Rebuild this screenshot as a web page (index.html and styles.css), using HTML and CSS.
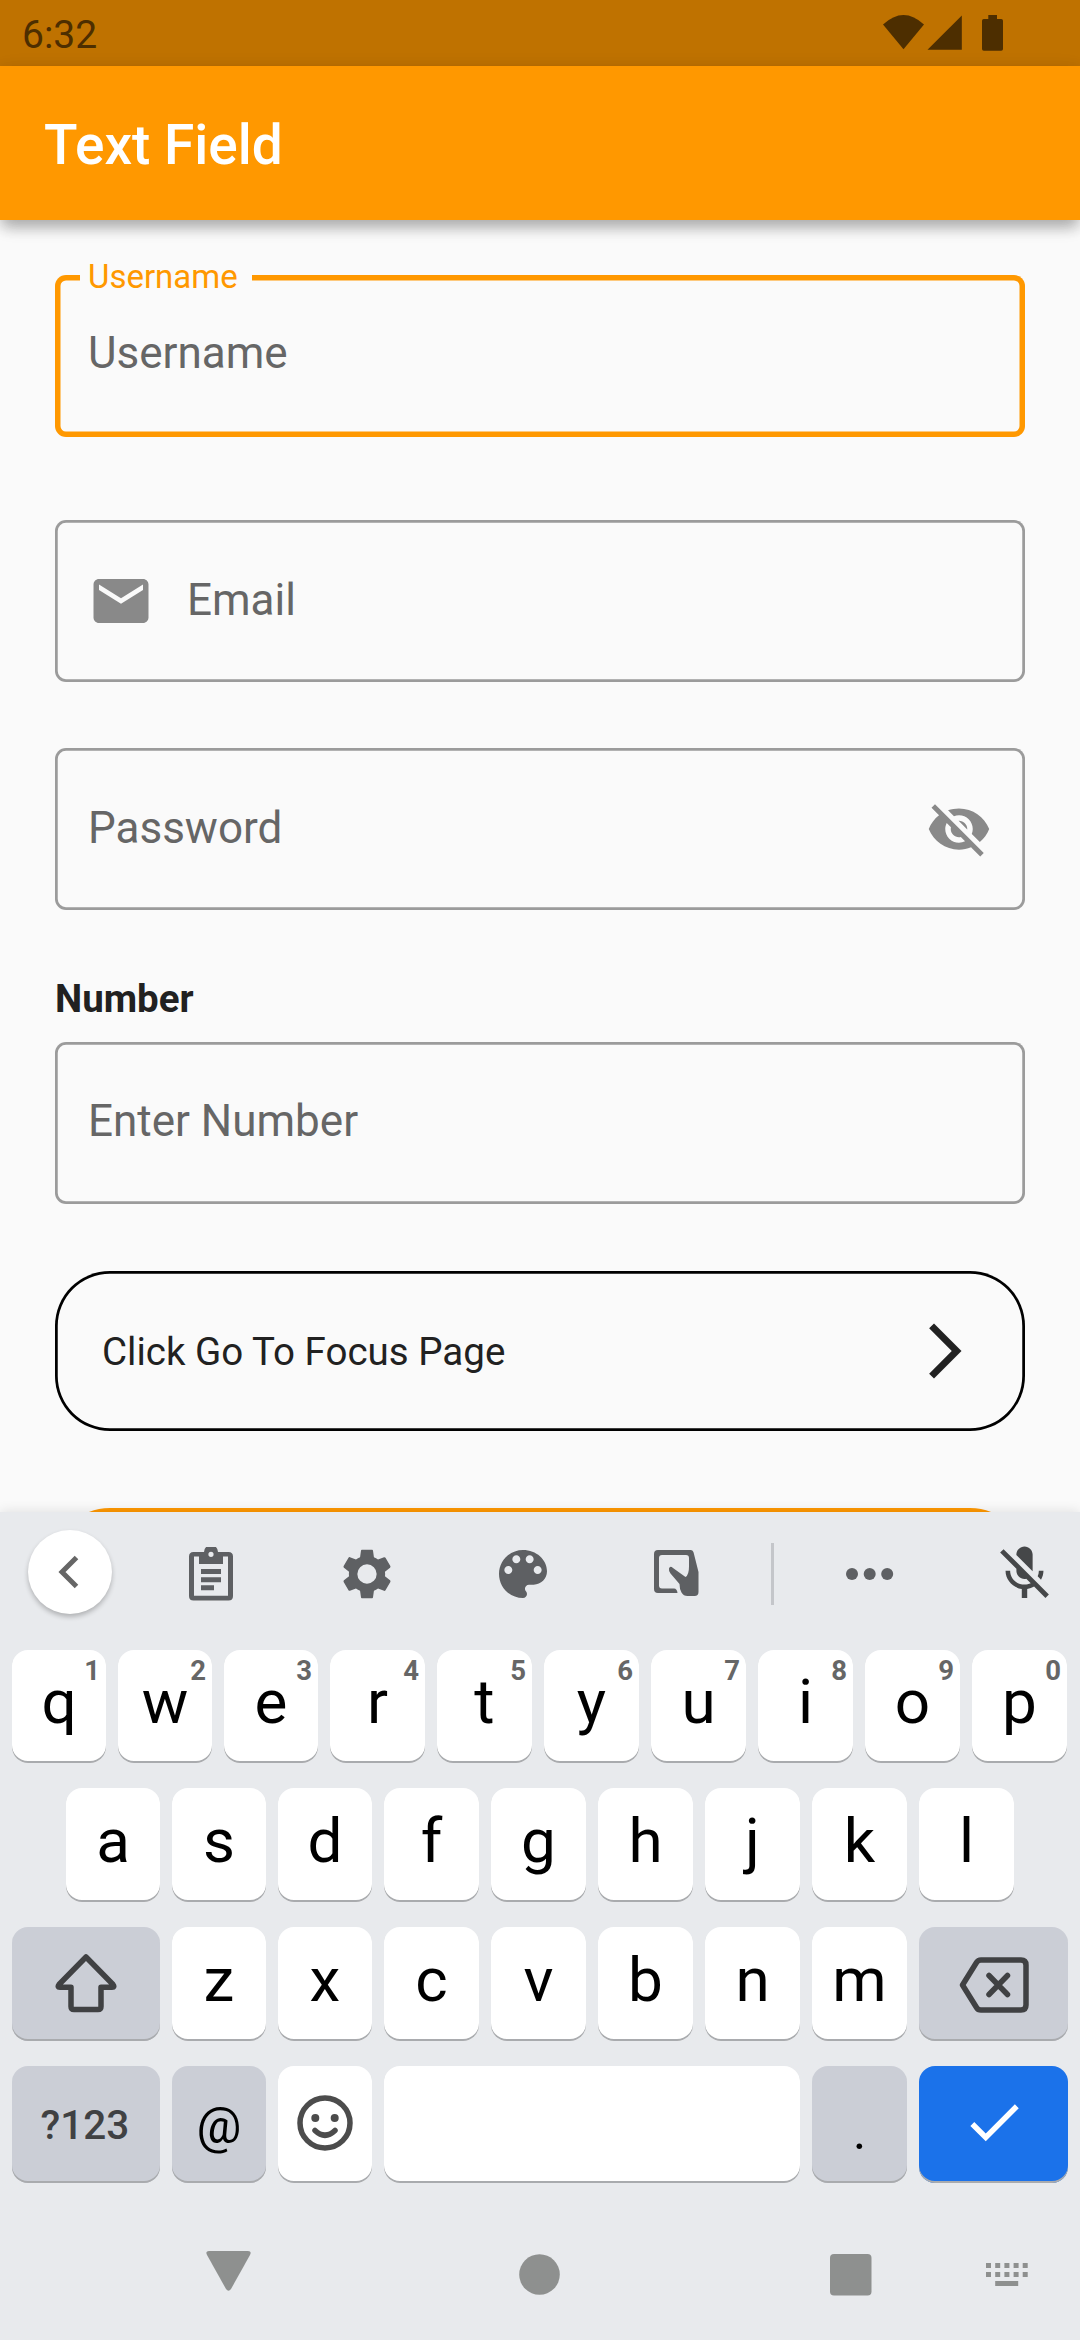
FILE: index.html
```html
<!DOCTYPE html>
<html lang="en">
<head>
<meta charset="utf-8">
<title>Text Field</title>
<link rel="stylesheet" href="styles.css">
</head>
<body>
<div class="screen">
  <header class="status-bar">
    <span class="clock">6:32</span>
    <svg class="status-icons" width="122" height="38" viewBox="882 14 122 38">
      <path d="M883 24.500Q903.500 5.500 924 24.500L903.500 49.300Z"/>
      <path d="M927.500 49.800L961.800 15.500V49.800Z"/>
      <path d="M988.300 15h8.700v4h4.200q1.800 0 1.800 1.800v28.200q0 1.800-1.800 1.800h-17.400q-1.800 0-1.800-1.800V20.800q0-1.800 1.800-1.800h4.500z"/>
    </svg>
  </header>
  <div class="app-bar"><h1>Text Field</h1></div>

  <main class="form">
    <div class="field focused">
      <span class="float-label">Username</span>
      <span class="hint">Username</span>
    </div>
    <div class="field email">
      <svg class="icon" viewBox="0 0 24 24"><path d="M20 4H4c-1.100 0-1.990.9-1.990 2L2 18c0 1.100.9 2 2 2h16c1.100 0 2-.9 2-2V6c0-1.100-.9-2-2-2zm0 4l-8 5-8-5V6l8 5 8-5v2z"/></svg>
      <span class="hint">Email</span>
    </div>
    <div class="field password">
      <span class="hint">Password</span>
      <svg class="icon" viewBox="0 0 24 24"><path d="M12 7c2.760 0 5 2.240 5 5 0 .65-.13 1.260-.36 1.830l2.920 2.920c1.510-1.260 2.700-2.890 3.430-4.750-1.730-4.390-6-7.500-11-7.500-1.400 0-2.740.25-3.980.7l2.160 2.160C10.740 7.130 11.350 7 12 7zM2 4.270l2.280 2.280.46.46C3.080 8.300 1.780 10.020 1 12c1.730 4.390 6 7.500 11 7.500 1.550 0 3.030-.3 4.380-.84l.42.42L19.730 22 21 20.730 3.270 3 2 4.270zM7.530 9.800l1.550 1.550c-.05.21-.08.43-.08.65 0 1.660 1.340 3 3 3 .22 0 .44-.03.65-.08l1.550 1.550c-.67.33-1.410.53-2.200.53-2.760 0-5-2.240-5-5 0-.79.2-1.530.53-2.200zm4.310-.78l3.150 3.150.02-.16c0-1.660-1.340-3-3-3l-.17.01z"/></svg>
    </div>
    <div class="caption">Number</div>
    <div class="field number"><span class="hint">Enter Number</span></div>
    <div class="link-card">
      <span>Click Go To Focus Page</span>
      <svg viewBox="0 0 24 24"><path d="M6.230 20.230L8 22l10-10L8 2 6.230 3.770 14.460 12z"/></svg>
    </div>
    <div class="next-card"></div>
  </main>

  <section class="keyboard">
    <div class="toolbar">
      <div class="back"><svg width="22" height="34" viewBox="0 0 22 34"><path d="M18.500 2.500L4 17 18.500 31.500" fill="none" stroke="#666" stroke-width="5"/></svg></div>
      <svg width="44" height="54" viewBox="0 0 44 54"><path fill-rule="evenodd" d="M4.500 5H15a7 7 0 0 1 14 0h10.500Q44 5 44 9.500v39.500Q44 53.500 39.500 53.500h-35Q0 53.500 0 49V9.500Q0 5 4.500 5zM10 9.500H5v39.300h34V9.500h-5V17H10zM22 4.700a2.600 2.600 0 1 0 0 5.200 2.600 2.600 0 0 0 0-5.200z"/><path d="M12 22h20v5H12zM12 30.200h20v5H12zM12 38.200h13v5H12z"/></svg>
      <svg width="58" height="58" viewBox="0 0 24 24"><path d="M19.430 12.980c.04-.32.07-.64.07-.98s-.03-.66-.07-.98l2.110-1.650c.19-.15.24-.42.12-.64l-2-3.460c-.12-.22-.39-.3-.61-.22l-2.490 1c-.52-.4-1.080-.73-1.690-.98l-.38-2.650C14.460 2.180 14.250 2 14 2h-4c-.25 0-.46.18-.49.42l-.38 2.650c-.61.25-1.170.59-1.690.98l-2.490-1c-.23-.09-.49 0-.61.22l-2 3.460c-.13.22-.07.49.12.64l2.110 1.650c-.04.32-.07.65-.07.98s.03.66.07.98l-2.110 1.650c-.19.15-.24.42-.12.64l2 3.460c.12.22.39.3.61.22l2.490-1c.52.4 1.080.73 1.690.98l.38 2.650c.03.24.24.42.49.42h4c.25 0 .46-.18.49-.42l.38-2.650c.61-.25 1.170-.59 1.690-.98l2.490 1c.23.09.49 0 .61-.22l2-3.460c.12-.22.07-.49-.12-.64l-2.110-1.650zM12 16a4 4 0 1 1 0-8 4 4 0 0 1 0 8z"/></svg>
      <svg width="64" height="64" viewBox="0 0 24 24"><path d="M12 3c-4.970 0-9 4.030-9 9s4.030 9 9 9c.83 0 1.500-.67 1.500-1.500 0-.39-.15-.74-.39-1.010-.23-.26-.38-.61-.38-.99 0-.83.67-1.500 1.500-1.500H16c2.760 0 5-2.240 5-5 0-4.420-4.030-8-9-8zm-5.500 9c-.83 0-1.500-.67-1.500-1.500S5.670 9 6.500 9 8 9.670 8 10.500 7.330 12 6.500 12zm3-4C8.670 8 8 7.330 8 6.500S8.670 5 9.500 5s1.500.67 1.500 1.500S10.330 8 9.500 8zm5 0c-.83 0-1.500-.67-1.500-1.500S13.670 5 14.500 5s1.500.67 1.500 1.500S15.330 8 14.500 8zm3 4c-.83 0-1.500-.67-1.500-1.500S16.670 9 17.500 9s1.500.67 1.500 1.500-.67 1.500-1.500 1.500z"/></svg>
      <svg class="tablet" width="45" height="46" viewBox="0 0 45 46"><path fill-rule="evenodd" d="M4 0H37Q39 0 39.600 2.500L44.500 22V42Q44.500 46 40.500 46H33.500Q29.500 46 27.500 42.500Q25.500 39 25.500 34L16.500 23.500Q14.500 21 15 18.500Q16 15.500 19 18L31.500 27Q35 25 35 16.500V8Q35 5 32 5H8Q5 5 5 8V35.500Q5 38.500 8 38.500H20Q23 38.500 23.500 43H4Q0 43 0 39V4Q0 0 4 0Z"/></svg>
      <div class="divider"></div>
      <svg width="48" height="12" viewBox="0 0 48 12"><circle cx="6" cy="6" r="6"/><circle cx="23.700" cy="6" r="6"/><circle cx="41.200" cy="6" r="6"/></svg>
      <svg class="mic" width="65" height="67" viewBox="0 0 24 24"><path d="M19 11h-1.700c0 .74-.16 1.430-.43 2.050l1.230 1.230c.56-.98.9-2.090.9-3.280zm-4.020.17c0-.06.02-.11.02-.17V5c0-1.660-1.340-3-3-3S9 3.340 9 5v.18l5.980 5.990zM4.270 3L3 4.270l6.010 6.010V11c0 1.660 1.330 3 2.990 3 .22 0 .44-.03.65-.08l1.660 1.660c-.71.33-1.500.52-2.310.52-2.760 0-5.300-2.100-5.300-5.100H5c0 3.410 2.720 6.230 6 6.720V21h2v-3.280c.91-.13 1.770-.45 2.540-.9L19.730 21 21 19.730 4.270 3z"/></svg>
    </div>

    <div class="row row-1">
      <div class="key slim">q<sup>1</sup></div><div class="key slim">w<sup>2</sup></div><div class="key slim">e<sup>3</sup></div><div class="key">r<sup>4</sup></div><div class="key">t<sup>5</sup></div><div class="key">y<sup>6</sup></div><div class="key">u<sup>7</sup></div><div class="key">i<sup>8</sup></div><div class="key">o<sup>9</sup></div><div class="key">p<sup>0</sup></div>
    </div>
    <div class="row row-2">
      <div class="key slim">a</div><div class="key slim">s</div><div class="key slim">d</div><div class="key">f</div><div class="key">g</div><div class="key">h</div><div class="key">j</div><div class="key">k</div><div class="key">l</div>
    </div>
    <div class="row row-3">
      <div class="key wide muted"><svg width="62" height="60" viewBox="0 0 62 60"><path d="M31 4L58 31.500Q60 34.300 57 34.300H46V53.500Q46 56.500 43 56.500H19Q16 56.500 16 53.500V34.300H5Q2 34.300 4 31.500Z"/></svg></div>
      <div class="key slim">z</div><div class="key slim">x</div><div class="key">c</div><div class="key">v</div><div class="key">b</div><div class="key">n</div><div class="key">m</div>
      <div class="key wide muted"><svg class="erase" width="70" height="56" viewBox="0 0 70 56"><path d="M3.500 28L17.500 5.500Q19 3 22 3H62Q67 3 67 8V48Q67 53 62 53H22Q19 53 17.500 50.500ZM30 18.500L48.500 37.500M48.500 18.500L30 37.500"/></svg></div>
    </div>
    <div class="row row-4">
      <div class="key wide muted mode">?123</div>
      <div class="key slim muted at">@</div>
      <div class="key slim"><svg class="smile" width="56" height="56" viewBox="0 0 56 56"><circle class="ring" cx="28" cy="28" r="25"/><circle class="eye" cx="18.300" cy="23" r="4"/><circle class="eye" cx="37.700" cy="23" r="4"/><path class="ring" d="M18 35.500Q28 45 38 35.500"/></svg></div>
      <div class="key space"></div>
      <div class="key muted dot">.</div>
      <div class="key wide enter"><svg width="66" height="66" viewBox="0 0 24 24"><path d="M9 16.170L4.830 12l-1.420 1.410L9 19 21 7l-1.410-1.410z"/></svg></div>
    </div>
    <nav class="nav">
      <svg width="45" height="40" viewBox="0 0 45 40"><path d="M3 0H42Q46 0 44 4L25 38Q22.500 41.500 20 38L1 4Q-1 0 3 0Z"/></svg>
      <svg class="home" width="41" height="41" viewBox="0 0 41 41"><circle cx="20.500" cy="20.500" r="20.300"/></svg>
      <svg class="recent" width="42" height="42" viewBox="0 0 42 42"><rect width="41.500" height="41.500" rx="4"/></svg>
      <svg class="ime" width="42" height="24" viewBox="0 0 42 24"><path d="M0 0h5v5H0zM9.200 0h5v5h-5zM18.400 0h5v5h-5zM27.600 0h5v5h-5zM36.700 0h5v5h-5zM0 9h5v5H0zM9.200 9h5v5h-5zM18.400 9h5v5h-5zM27.600 9h5v5h-5zM36.700 9h5v5h-5zM9.200 18h23v5h-23z"/></svg>
    </nav>
  </section>
</div>
</body>
</html>
```
FILE: styles.css
```css
* { box-sizing: border-box; }
body { margin: 0; font-family: Roboto, "Liberation Sans", sans-serif; }
svg { display: block; flex: none; }

.screen {
  width: 1080px;
  height: 2340px;
  display: flex;
  flex-direction: column;
  overflow: hidden;
  background: #fafafa;
}

.status-bar {
  height: 66px;
  flex: none;
  display: flex;
  align-items: flex-start;
  justify-content: space-between;
  padding: 14px 76px 0 22px;
  background: #bf7200;
  color: #4d2e00;
}
.clock { font-size: 39px; line-height: 42px; }
.status-icons { fill: #4d2e00; }

.app-bar {
  height: 154px;
  flex: none;
  display: flex;
  align-items: center;
  padding: 3px 44px 0;
  background: #ff9800;
  box-shadow: 0 11px 14px -3px rgba(0, 0, 0, .2), 0 5px 14px rgba(0, 0, 0, .13), 0 3px 20px rgba(0, 0, 0, .06);
  z-index: 1;
}
.app-bar h1 { margin: 0; color: #fff; font-size: 55px; font-weight: 500; line-height: 64px; }

.form {
  height: 1292px;
  flex: none;
  display: flex;
  flex-direction: column;
  padding: 55px 55px 0;
  overflow: hidden;
}
.field {
  position: relative;
  height: 162px;
  flex: none;
  display: flex;
  align-items: center;
  padding: 0 33px;
  border-radius: 11px;
  box-shadow: inset 0 0 0 2.75px #9b9b9b;
}
.hint { color: #666; font-size: 44px; line-height: 52px; padding-bottom: 2px; }
.icon { width: 66px; height: 66px; fill: #898989; }
.focused { box-shadow: inset 0 0 0 5.5px #ff9800; }
.focused .hint { padding-bottom: 7px; }
.float-label {
  position: absolute;
  left: 25px;
  top: -17px;
  width: 172px;
  padding-left: 8px;
  background: #fafafa;
  color: #ff9800;
  font-size: 33px;
  line-height: 38px;
}
.email { margin-top: 83px; gap: 33px; }
.password { margin-top: 66px; justify-content: space-between; }
.number .hint { padding-bottom: 4px; }
.caption {
  margin-top: 66px;
  height: 66px;
  flex: none;
  color: #212121;
  font-size: 38.5px;
  font-weight: 700;
  line-height: 45px;
}
.link-card {
  margin-top: 67px;
  height: 160px;
  flex: none;
  display: flex;
  align-items: center;
  justify-content: space-between;
  padding: 0 47px;
  border-radius: 55px;
  box-shadow: inset 0 0 0 2.75px #000;
  color: #212121;
  font-size: 38.5px;
}
.link-card svg { width: 66px; height: 66px; fill: #212121; }
.next-card {
  margin-top: 77px;
  height: 160px;
  flex: none;
  border: 6px solid #ff9800;
  border-radius: 55px;
}

.keyboard {
  flex: 1;
  display: flex;
  flex-direction: column;
  background: #e8eaed;
  box-shadow: 0 0 12px rgba(0, 0, 0, .12);
  z-index: 1;
}
.toolbar {
  height: 138px;
  display: grid;
  grid-template-columns: 133px repeat(4, 156px) 30px 165px 128px;
  align-items: center;
  justify-items: center;
  padding-bottom: 15px;
  fill: #5e6063;
}
.back {
  width: 84px;
  height: 84px;
  display: grid;
  place-items: center;
  margin: 0 0 4px 7px;
  padding-right: 2px;
  border-radius: 50%;
  background: #fff;
  box-shadow: 0 3px 5px rgba(0, 0, 0, .24);
}
.tablet { margin: 0 5px 2px 0; }
.divider { width: 3px; height: 62px; background: #c4c6ca; }
.mic { fill: #454749; margin-left: 16px; }

.row { display: flex; gap: 12px; padding: 0 12px; margin-bottom: 25px; }
.row-1 { height: 113px; }
.row-2 { height: 114px; padding: 0 66px; }
.row-3 { height: 114px; }
.row-4 { height: 117px; }
.key {
  position: relative;
  flex: none;
  width: 95px;
  display: flex;
  align-items: center;
  justify-content: center;
  padding-bottom: 9px;
  border-radius: 16px;
  background: #fff;
  box-shadow: inset 0 -2px 0 #a9abae;
  color: #000;
  font-size: 62px;
  line-height: 72px;
}
.key sup {
  position: absolute;
  top: 6px;
  right: 6px;
  color: #666;
  font-size: 27.5px;
  font-weight: 700;
  line-height: 30px;
}
.slim { width: 94px; }
.wide { width: 148px; }
.wide:last-child { width: 149px; }
.space { width: 416px; }
.muted { background: #cbced6; }
.muted svg { fill: none; stroke: #404143; stroke-width: 5.5; stroke-linejoin: round; stroke-linecap: round; margin-top: 6px; }
.muted svg.erase { margin-top: 10px; }
.mode { color: #404143; font-size: 40.5px; font-weight: 500; padding: 0 2px 0 0; }
.at { font-size: 50px; padding: 3px 0 0; }
.dot { font-size: 50px; padding: 14px 0 0; }
.smile { margin-top: 6px; }
.ring { fill: none; stroke: #4c4c4c; stroke-width: 5.5; stroke-linecap: round; }
.eye { fill: #4c4c4c; }
.enter { background: #1b72ea; }
.enter svg { fill: #fff; margin-top: 4px; }

.nav { display: flex; padding: 43px 0 0 206px; fill: #8e908f; }
.home { margin: 3px 0 0 268px; }
.recent { margin: 3px 0 0 270px; }
.ime { margin: 12px 0 0 114px; }
```
